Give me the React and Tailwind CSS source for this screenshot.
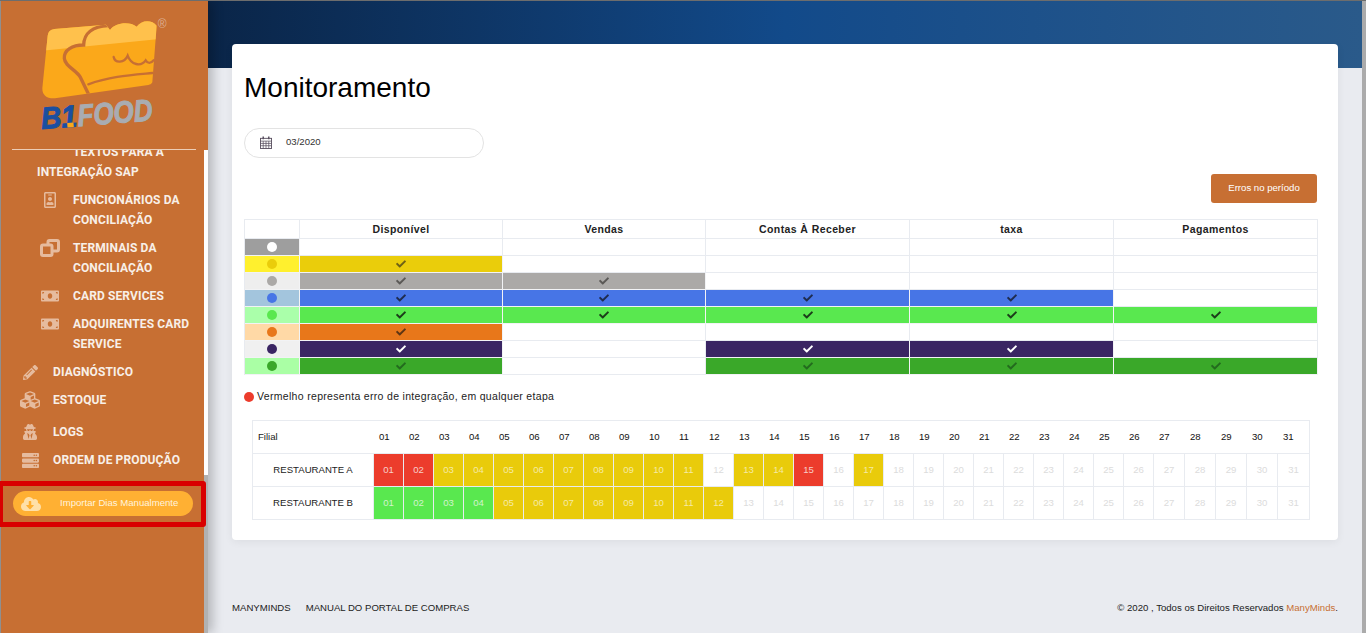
import React from "react";
import {
  FaRegIdBadge,
  FaMoneyBill,
  FaPencilAlt,
  FaCubes,
  FaUserSecret,
  FaServer,
  FaCloudDownloadAlt,
  FaCheck,
} from "react-icons/fa";

const ICON = "text-[#e6bb9e]";

const CARD_SHAPE =
  "M58 42 L213 29 L225 45 C240 22 285 18 305 35 C318 15 350 12 365 32 L352 202 Q350 208 340 210 L60 250 Q22 252 22 220 L38 62 Q40 44 58 42 Z";

const Logo = () => (
  <svg viewBox="0 0 420 360" width="140" height="120" className="block overflow-visible">
    <defs>
      <clipPath id="card">
        <path d={CARD_SHAPE} />
      </clipPath>
    </defs>
    <path d={CARD_SHAPE} fill="#fba81a" />
    <polygon points="20,107 370,72 370,0 20,0" fill="#ffc14c" clipPath="url(#card)" />
    <g fill="none" stroke="#c76f33" strokeLinecap="round" clipPath="url(#card)">
      <path strokeWidth="10" d="M220 32 C172 34 147 55 146 90 C112 90 86 105 88 130 C90 155 125 165 136 187 L160 236" />
      <path strokeWidth="7" d="M160 208 C225 184 290 180 352 174" />
      <path strokeWidth="7" d="M236 126 C240 145 268 145 278 122 C288 150 318 156 332 136 C338 146 348 146 356 136" />
    </g>
    <g
      transform="rotate(-4.5 22 340)"
      fontFamily="'Liberation Sans', sans-serif"
      fontStyle="italic"
      fontWeight="700"
      fontSize="92"
      strokeWidth="3"
    >
      <text x="20" y="342" fill="#1a4fa0" stroke="#1a4fa0" textLength="108" lengthAdjust="spacingAndGlyphs">
        B1
      </text>
      <text x="130" y="342" fill="#a9acb1" stroke="#a9acb1" textLength="226" lengthAdjust="spacingAndGlyphs">
        FOOD
      </text>
    </g>
    <rect x="97" y="323" width="19" height="14" fill="#fba81a" transform="rotate(-4.5 106 330)" />
    <text x="368" y="39" fontSize="36" fill="#dcae90" fontFamily="'Liberation Sans', sans-serif">
      ®
    </text>
  </svg>
);

const CloneIcon = () => (
  <svg width="20" height="18" viewBox="0 0 20 18" fill="none" stroke="#e6bb9e" strokeWidth="3">
    <rect x="8" y="1.5" width="10.5" height="10.5" rx="1.5" />
    <rect x="1.5" y="6" width="10.5" height="10.5" rx="1.5" fill="#c76f33" />
  </svg>
);

const CalendarIcon = () => (
  <svg width="12" height="13" viewBox="0 0 13 14" fill="none" stroke="#5a5060" strokeWidth="1" className="-mt-0.5">
    <rect x="0.5" y="2.5" width="12" height="11" />
    <path d="M0.5 5.5H12.5M0.5 8H12.5M0.5 10.5H12.5M3.5 5.5V13.5M6.5 5.5V13.5M9.5 5.5V13.5" strokeWidth="0.8" />
    <path d="M3.5 0.5V3.5M9.5 0.5V3.5" strokeWidth="1.6" />
  </svg>
);

// menu row: sub items are indented further than top level items
const MenuItem = ({ icon: Icon, size, lines, sub, className }) => (
  <div className={`flex mb-2 ${sub ? "pl-[36px]" : "pl-[16px]"} ${className || ""}`}>
    <div className="w-[26px] h-5 mr-[10px] flex items-center justify-center shrink-0">
      <Icon className={ICON} style={{ fontSize: size }} />
    </div>
    <div className="text-[12px] leading-5 font-bold tracking-[0.12px] text-[#f8efe8] whitespace-nowrap">
      {lines.map((l) => (
        <div key={l}>{l}</div>
      ))}
    </div>
  </div>
);

const Sidebar = () => (
  <aside className="w-[208px] shrink-0 h-full flex flex-col bg-[#c76f33] border-l border-[#8f8f8f] relative z-10 shadow-[5px_0_10px_rgba(0,0,0,0.22)] font-['Roboto',sans-serif]">
    <div className="h-[148px] shrink-0 pl-[34px] pt-[14px]">
      <Logo />
    </div>
    <div className="h-px w-[184px] ml-[11px] bg-[#eccdb6] shrink-0" />
    <div className="flex flex-1 min-h-0">
      <div className="w-[203px] shrink-0">
        <div className="h-[325px] overflow-hidden">
          <div className="-mt-[8px]">
            <div className="mb-2 text-[12px] leading-5 font-bold tracking-[0.12px] text-[#f8efe8] pl-[36px]">
              <div className="pl-[36px]">TEXTOS PARA A</div>
              <div>INTEGRAÇÃO SAP</div>
            </div>
            <MenuItem sub icon={FaRegIdBadge} size={16} lines={["FUNCIONÁRIOS DA", "CONCILIAÇÃO"]} />
            <MenuItem sub icon={CloneIcon} lines={["TERMINAIS DA", "CONCILIAÇÃO"]} />
            <MenuItem sub icon={FaMoneyBill} size={18} lines={["CARD SERVICES"]} />
            <MenuItem sub icon={FaMoneyBill} size={18} lines={["ADQUIRENTES CARD", "SERVICE"]} />
            <MenuItem icon={FaPencilAlt} size={15} lines={["DIAGNÓSTICO"]} />
            <MenuItem icon={FaCubes} size={20} lines={["ESTOQUE"]} className="mb-3" />
            <MenuItem icon={FaUserSecret} size={16} lines={["LOGS"]} />
            <MenuItem icon={FaServer} size={17} lines={["ORDEM DE PRODUÇÃO"]} />
          </div>
        </div>
        <div className="mt-[6px] -ml-[3px] w-[208px] h-[46px] border-[5px] border-[#d90000] rounded-[3px] pl-[10px] pt-[5px] relative z-20">
          <div className="w-[180px] h-[25px] rounded-full bg-[#ffb033] flex items-center pl-[8px]">
            <FaCloudDownloadAlt className="text-[20px] text-[#ffe0a8]" />
            <span className="ml-[19px] text-[9.6px] text-[#fff3dd] font-['Liberation_Sans',sans-serif] whitespace-nowrap">
              Importar Dias Manualmente
            </span>
          </div>
        </div>
      </div>
      <div className="w-1 shrink-0 bg-[#b1b1b1]">
        <div className="h-[325px] bg-white" />
      </div>
    </div>
  </aside>
);

const COLS = ["Disponível", "Vendas", "Contas À Receber", "taxa", "Pagamentos"];

const STATUS = [
  { tone: "bg-[#9e9e9e]", dot: "bg-white", fill: "", check: "", done: [] },
  { tone: "bg-[#fff02e]", dot: "bg-[#eacd0b]", fill: "bg-[#eacd0b]", check: "text-[#6e6216]", done: [0] },
  { tone: "bg-[#eeeeee]", dot: "bg-[#aba9a7]", fill: "bg-[#aba9a7]", check: "text-[#5b5957]", done: [0, 1] },
  { tone: "bg-[#a3c5dd]", dot: "bg-[#4775e6]", fill: "bg-[#4775e6]", check: "text-[#1f2c4f]", done: [0, 1, 2, 3] },
  { tone: "bg-[#aaffaa]", dot: "bg-[#59e84f]", fill: "bg-[#59e84f]", check: "text-[#1c3d1a]", done: [0, 1, 2, 3, 4] },
  { tone: "bg-[#ffd9a6]", dot: "bg-[#e8771a]", fill: "bg-[#e8771a]", check: "text-[#5e3514]", done: [0] },
  { tone: "bg-[#f0f0f0]", dot: "bg-[#3a2563]", fill: "bg-[#3a2563]", check: "text-white", done: [0, 2, 3] },
  { tone: "bg-[#aaffa5]", dot: "bg-[#3aa829]", fill: "bg-[#3aa829]", check: "text-[#236b1e]", done: [0, 2, 3, 4] },
];

const StatusTable = () => (
  <div className="w-[1074px] border-l border-t border-[#e8ebf0] grid grid-cols-[55px_203px_203px_204px_204px_204px] font-['Liberation_Sans',sans-serif]">
    <div className="h-[19px] border-r border-b border-[#e8ebf0]" />
    {COLS.map((c) => (
      <div
        key={c}
        className="h-[19px] pt-px border-r border-b border-[#e8ebf0] flex items-center justify-center text-[10.5px] font-bold tracking-[0.4px] text-[#222]"
      >
        {c}
      </div>
    ))}
    {STATUS.map((s, i) => (
      <React.Fragment key={i}>
        <div className={`h-[17px] border-r border-b border-[#f2f3f5] flex items-center justify-center ${s.tone}`}>
          <span className={`w-[10px] h-[10px] rounded-full ${s.dot}`} />
        </div>
        {COLS.map((c, j) => {
          const on = s.done.includes(j);
          return (
            <div
              key={c}
              className={`h-[17px] border-r border-b flex items-center justify-center ${on ? `${s.fill} border-[#f2f3f5]` : "border-[#e8ebf0]"}`}
            >
              {on && <FaCheck className={`text-[10px] ${s.check}`} />}
            </div>
          );
        })}
      </React.Fragment>
    ))}
  </div>
);

const DAYS = Array.from({ length: 31 }, (_, i) => String(i + 1).padStart(2, "0"));

const RED = "bg-[#ec3c2c] text-[#f7cfc9]";
const YEL = "bg-[#e9cb0b] text-[#f5eaa6]";
const GRN = "bg-[#59e84f] text-[#d2f3cc]";

const rowA = (d) => {
  if (d <= 2 || d === 15) return RED;
  if (d <= 11 || d === 13 || d === 14 || d === 17) return YEL;
  return "text-[#dcdcdc]";
};
const rowB = (d) => {
  if (d <= 4) return GRN;
  if (d <= 12) return YEL;
  return "text-[#dcdcdc]";
};

const DayTable = () => (
  <div className="ml-2 w-[1058px] border border-b-0 border-[#e8ebf0] grid grid-cols-[121px_repeat(26,30px)_repeat(5,31px)] text-[9.6px] font-['Liberation_Sans',sans-serif]">
    <div className="h-[33px] border-b border-[#e8ebf0] flex items-center pl-[5px] text-[#222]">Filial</div>
    {DAYS.map((d) => (
      <div key={d} className="h-[33px] border-b border-[#e8ebf0] flex items-center pl-[5px] text-[#111]">
        {d}
      </div>
    ))}
    {[
      ["RESTAURANTE A", rowA],
      ["RESTAURANTE B", rowB],
    ].map(([name, tone]) => (
      <React.Fragment key={name}>
        <div className="h-[33px] border-r border-b border-[#e8ebf0] flex items-center justify-center text-[#222]">{name}</div>
        {DAYS.map((d, i) => (
          <div
            key={d}
            className={`h-[33px] border-b border-[#e8ebf0] flex items-center justify-center ${i === 30 ? "" : "border-r"} ${tone(i + 1)}`}
          >
            {d}
          </div>
        ))}
      </React.Fragment>
    ))}
  </div>
);

export default function App() {
  return (
    <div className="w-[1366px] h-[633px] overflow-hidden flex bg-[#e9ebf0] border-t border-[#6d6d6d] font-['Liberation_Sans',sans-serif]">
      <Sidebar />
      <main className="flex-1 min-w-0 flex flex-col">
        <div className="h-[67px] shrink-0 bg-gradient-to-r from-[#0a2548] via-[#124a8a] to-[#2a5a8a]" />
        <div className="-mt-[24px] mx-6 h-[496px] shrink-0 bg-white rounded-[4px] shadow-[0_2px_8px_rgba(0,0,0,0.06)] px-3 pt-[26px] relative">
          <h1 className="h-9 text-[28px] leading-9 text-black">Monitoramento</h1>
          <div className="mt-[22px] w-[240px] h-[30px] rounded-full border border-[#e3e3e3] flex items-center pl-[15px]">
            <CalendarIcon />
            <span className="ml-[14px] pb-0.5 text-[9.6px] text-[#333]">03/2020</span>
          </div>
          <div className="mt-4 w-[1073px] flex justify-end">
            <button className="w-[106px] h-[29px] rounded-[3px] bg-[#c76f33] text-white text-[9.6px]">Erros no período</button>
          </div>
          <div className="mt-4">
            <StatusTable />
          </div>
          <div className="mt-[14px] h-4 flex items-center text-[10.5px] tracking-[0.32px] text-[#222]">
            <span className="w-[10px] h-[10px] rounded-full bg-[#ec3c2c] mr-[3px]" />
            Vermelho representa erro de integração, em qualquer etapa
          </div>
          <div className="mt-[15px]">
            <DayTable />
          </div>
        </div>
        <footer className="mt-[61px] mx-6 h-[14px] flex items-center text-[9.6px] text-[#222]">
          <span>MANYMINDS</span>
          <span className="ml-[15px]">MANUAL DO PORTAL DE COMPRAS</span>
          <span className="ml-auto">
            © 2020 , Todos os Direitos Reservados <span className="text-[#c76f33]">ManyMinds</span>.
          </span>
        </footer>
      </main>
      <div className="w-1 shrink-0 bg-[#ababab]" />
    </div>
  );
}
